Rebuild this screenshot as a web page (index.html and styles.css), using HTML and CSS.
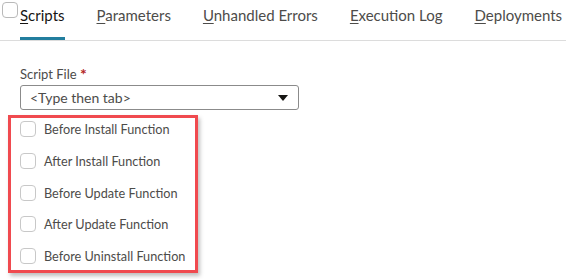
FILE: index.html
```html
<!DOCTYPE html>
<html>
<head>
<meta charset="utf-8">
<link rel="stylesheet" href="styles.css">
</head>
<body>
<div class="page">
  <div class="corner-check"></div>
  <nav class="tabs">
    <div class="tab active"><span class="u">S</span>cripts</div>
    <div class="tab"><span class="u">P</span>arameters</div>
    <div class="tab"><span class="u">U</span>nhandled Errors</div>
    <div class="tab"><span class="u">E</span>xecution Log</div>
    <div class="tab"><span class="u">D</span>eployments</div>
  </nav>
  <div class="content">
    <div class="field-label">Script File <span class="req">*</span></div>
    <div class="select">
      <span class="placeholder">&lt;Type then tab&gt;</span>
      <svg class="caret" width="10" height="6" viewBox="0 0 10 6"><path d="M0 0h10L5 6z" fill="#161513"/></svg>
    </div>
    <div class="highlight">
      <label class="row"><span class="box"></span><span class="text">Before Install Function</span></label>
      <label class="row"><span class="box"></span><span class="text">After Install Function</span></label>
      <label class="row"><span class="box"></span><span class="text">Before Update Function</span></label>
      <label class="row"><span class="box"></span><span class="text">After Update Function</span></label>
      <label class="row"><span class="box"></span><span class="text">Before Uninstall Function</span></label>
    </div>
  </div>
</div>
</body>
</html>
```
FILE: styles.css
```css
* { box-sizing: border-box; }
html, body { margin: 0; padding: 0; background: #fff; }
body { font-family: Lato, "Noto Sans", sans-serif; color: #161513; width: 566px; height: 279px; overflow: hidden; }
.page { position: relative; }
.corner-check {
  position: absolute; left: 2px; top: 2px; width: 16px; height: 16px;
  border: 1px solid #b9b9b9; border-radius: 4px; background: #fff;
}
.tabs {
  display: flex; gap: 32px; padding-left: 20px; height: 41px;
  border-bottom: 1px solid #dcdcdc;
}
.tab {
  font-size: 15px; color: #4d4c4a; height: 40px; line-height: 30px;
  border-bottom: 3px solid transparent; margin-bottom: -1px;
}
.tab.active { color: #161513; border-bottom-color: #227e9e; }
.u { text-decoration: underline; text-underline-offset: 2px; text-decoration-thickness: 1px; }
.content { padding: 24px 0 0 20px; }
.field-label { font-size: 13px; color: #4d4c4a; height: 20px; line-height: 18px; }
.req { color: #b3261e; font-size: 16px; font-weight: bold; vertical-align: -1px; }
.select {
  width: 279px; height: 25px; border: 1px solid #8b8b8b; border-radius: 3px;
  display: flex; align-items: center; justify-content: space-between;
  padding: 0 10px 0 9px;
}
.placeholder { font-size: 14px; color: #4d4c4a; }
.highlight {
  margin: 5px 0 0 -12px; width: 190px; height: 158px;
  border: 3px solid #f04a4f; box-shadow: 2px 3px 4px rgba(0,0,0,0.25);
  padding: 0 0 0 9px;
  display: flex; flex-direction: column; gap: 9.75px;
}
.row { display: flex; align-items: center; gap: 8px; height: 22px; }
.box { width: 16px; height: 16px; border: 1px solid #c8c8c8; border-radius: 4px; flex: none; }
.text { font-size: 12.7px; color: #4d4c4a; }
```
